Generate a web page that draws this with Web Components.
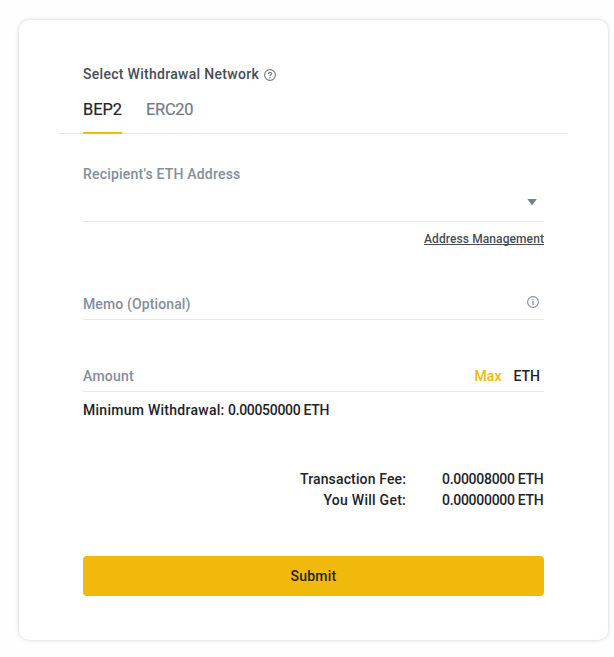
<!DOCTYPE html>
<html lang="en">
<head>
<meta charset="utf-8">
<title>Withdraw</title>
<style>
html,body{margin:0;height:100%;background:#fefefe;overflow:hidden}
body{font:500 14px/20px Roboto,"Liberation Sans",sans-serif;color:#1e2329}
</style>
</head>
<body>
<withdraw-card></withdraw-card>
<script>
const attach = (el, html) => { el.attachShadow({mode:'open'}).innerHTML = html; };

// Text run whose tracking is adjusted so that it spans the given width.
customElements.define('fit-text', class extends HTMLElement {
  connectedCallback() {
    if (this.shadowRoot) return;
    attach(this, `<style>:host{display:block;white-space:nowrap;width:max-content}span{display:inline-block}:host([underline]) span{text-decoration:underline;text-decoration-thickness:1px;text-underline-offset:1px;text-decoration-skip-ink:none}</style><span><slot></slot></span>`);
    const s = this.shadowRoot.querySelector('span');
    const w = +this.getAttribute('span');
    const gap = (w - s.getBoundingClientRect().width) / this.textContent.length;
    s.style.letterSpacing = gap.toFixed(3) + 'px';
  }
});

customElements.define('ui-icon', class extends HTMLElement {
  connectedCallback() {
    const art = {
      help: `<svg width="12" height="12" viewBox="0 0 12 12" fill="none" stroke="#707a8a"><circle cx="6" cy="6" r="5.4" stroke-width="1.1"/><path d="M4.4 4.9C4.4 2.8 7.6 2.8 7.6 4.8C7.6 5.9 6 5.8 6 7.1" stroke-width="1.15"/><path d="M6 8v1.2" stroke-width="1.3"/></svg>`,
      info: `<svg width="12" height="12" viewBox="0 0 12 12" fill="none" stroke="#848e9c"><circle cx="6" cy="6" r="5.4" stroke-width="1.1"/><path d="M6 2.9v1.3M6 5.1v4" stroke-width="1.3"/></svg>`,
      caret: `<svg width="10" height="7" viewBox="0 0 10 7"><path d="M.8 0h8.6v.8L5.1 6.2.8.8z" fill="#76808f"/></svg>`
    };
    attach(this, `<style>:host{display:block;line-height:0}svg{display:block}</style>${art[this.getAttribute('name')]}`);
  }
});

customElements.define('network-tabs', class extends HTMLElement {
  connectedCallback() {
    attach(this, `<style>
      :host{display:flex;gap:24px;height:36px;margin:0 -24px;padding-left:24px;font-size:16.4px;font-weight:400;line-height:24px;
        background:linear-gradient(#e6e8ea,#e6e8ea) 0 35px/100% 1px no-repeat}
      ::slotted(*){box-sizing:border-box;height:36px;color:#707a8a;-webkit-text-stroke:.2px}
      ::slotted([active]){color:#1e2329;border-bottom:2px solid #f0b90b}
    </style><slot></slot>`);
  }
});

customElements.define('form-field', class extends HTMLElement {
  connectedCallback() {
    attach(this, `<style>
      :host{display:flex;justify-content:space-between;box-sizing:border-box;border-bottom:1px solid #e6e8ea;color:#848e9c}
      .end{display:flex;gap:12px}
    </style><slot></slot><div class="end"><slot name="end"></slot></div>`);
  }
});

customElements.define('fee-row', class extends HTMLElement {
  connectedCallback() {
    attach(this, `<style>:host{display:flex;justify-content:flex-end;gap:36px;height:21px;padding-right:.5px}</style><slot></slot>`);
  }
});

customElements.define('submit-button', class extends HTMLElement {
  connectedCallback() {
    attach(this, `<style>button{all:unset;box-sizing:border-box;width:100%;height:40px;border-radius:4px;background:#f0b90b;display:flex;align-items:center;justify-content:center;cursor:pointer}:host{display:block}</style><button><slot></slot></button>`);
  }
});

customElements.define('withdraw-card', class extends HTMLElement {
  connectedCallback() {
    attach(this, `<style>
      :host{display:block;padding:20px 0 0 19px}
      .card{box-sizing:border-box;width:589px;height:620px;padding:44px 64px 0;background:#fff;border-radius:10px;box-shadow:0 0 4px rgba(0,0,0,.18)}
      .title{display:flex;gap:5px;color:#474d57;height:34px}
      .title ui-icon{margin-top:5px}
      .address{height:58px;margin-top:30px}
      .address ui-icon{margin:35px 7px 0 0}
      .manage{display:flex;justify-content:flex-end;height:72px;padding-top:7px;box-sizing:border-box;font-size:12px;color:#474d57}
      .memo{height:26px}
      .memo ui-icon{margin:2px 5px 0 0}
      .amount{height:26px;margin-top:46px}
      .amount .max{color:#f0b90b}
      .amount .unit{color:#1e2329;margin-right:4px}
      .minimum{display:flex;gap:3.5px;margin-top:8px}
      .fees{margin-top:49px}
      submit-button{margin-top:45px}
    </style>
    <div class="card">
      <div class="title"><fit-text span="176">Select Withdrawal Network</fit-text><ui-icon name="help"></ui-icon></div>
      <network-tabs><fit-text span="39" active>BEP2</fit-text><fit-text span="47.2">ERC20</fit-text></network-tabs>
      <form-field class="address"><fit-text span="157.5">Recipient's ETH Address</fit-text><ui-icon slot="end" name="caret"></ui-icon></form-field>
      <div class="manage"><fit-text span="120" underline>Address Management</fit-text></div>
      <form-field class="memo"><fit-text span="107.5">Memo (Optional)</fit-text><ui-icon slot="end" name="info"></ui-icon></form-field>
      <form-field class="amount"><fit-text span="51">Amount</fit-text><fit-text slot="end" class="max" span="27">Max</fit-text><fit-text slot="end" class="unit" span="26.5">ETH</fit-text></form-field>
      <div class="minimum"><fit-text span="141.5">Minimum Withdrawal:</fit-text><fit-text span="101">0.00050000 ETH</fit-text></div>
      <div class="fees">
        <fee-row><fit-text span="106">Transaction Fee:</fit-text><fit-text span="101.5">0.00008000 ETH</fit-text></fee-row>
        <fee-row><fit-text span="82.5">You Will Get:</fit-text><fit-text span="101.5">0.00000000 ETH</fit-text></fee-row>
      </div>
      <submit-button><fit-text span="46">Submit</fit-text></submit-button>
    </div>`);
  }
});
</script>
</body>
</html>
